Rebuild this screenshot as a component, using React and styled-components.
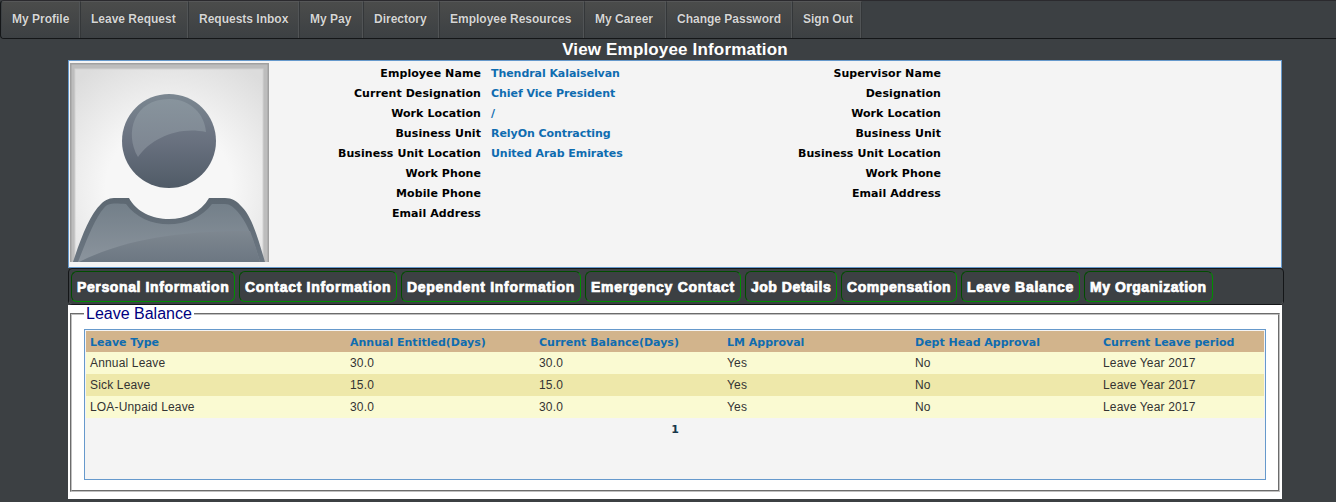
import React from "react";
import styled, { createGlobalStyle } from "styled-components";

const GlobalStyle = createGlobalStyle`
  * { box-sizing: border-box; }
  body {
    margin: 0;
    background: #3c4043;
    font-family: "Liberation Sans", Arial, sans-serif;
    overflow: hidden;
  }
`;

const Page = styled.div`
  height: 502px;
  overflow: hidden;
`;

const NavBar = styled.nav`
  display: flex;
  height: 39px;
  margin-right: -6px;
  padding-left: 1px;
  border: 1px solid #141618;
  border-top-color: #2b2a2e;
  border-radius: 4px;
  overflow: hidden;
`;

const NavItem = styled.a`
  width: ${(p) => p.$width}px;
  flex: none;
  padding-left: 10px;
  border-top: 1px solid #565758;
  border-right: 1px solid #343739;
  box-shadow: inset -1px 0 0 #515456;
  background: linear-gradient(#4b4c4b, #3c4043);
  color: #d5d5d5;
  font-size: 12px;
  font-weight: bold;
  line-height: 35px;
  white-space: nowrap;
  text-shadow: 0 0 1px #222;
`;

const Title = styled.h1`
  margin: 0;
  padding-left: 14px;
  height: 21px;
  color: #fff;
  font-size: 17px;
  letter-spacing: 0.16px;
  line-height: 22px;
  text-align: center;
`;

const Content = styled.main`
  width: 1216px;
  margin-left: 68px;
`;

const Profile = styled.section`
  display: flex;
  width: 1214px;
  height: 208px;
  padding: 2px 1px;
  border: 1px solid #6699cc;
  background: #f4f4f4;
`;

const Avatar = styled.svg`
  display: block;
  flex: none;
  width: 199px;
  height: 199px;
`;

const Details = styled.dl`
  display: grid;
  grid-template-columns: ${(p) => p.$label}px 248px;
  grid-auto-rows: 20px;
  align-content: start;
  column-gap: ${(p) => p.$gap}px;
  margin: 0;
  font: bold 11px/22px "DejaVu Sans", Verdana, sans-serif;
`;

const Label = styled.dt`
  color: #000;
  letter-spacing: 0.08px;
  text-align: right;
  white-space: nowrap;
`;

const Value = styled.dd`
  margin: 0;
  color: #0f6cb0;
  letter-spacing: -0.06px;
  white-space: nowrap;
`;

const TabBar = styled.div`
  display: flex;
  gap: 4px;
  height: 37px;
  padding: 2px;
  border: 1px solid #141618;
  border-radius: 4px;
  background: linear-gradient(#3c4043, #3c4043) padding-box, linear-gradient(#3c4043 50%, #fff 50%);
`;

const Tab = styled.button`
  width: ${(p) => p.$width}px;
  height: 31px;
  flex: none;
  padding: 0 0 0 5px;
  border: 1px solid;
  border-color: #004d00 #008f00 #008f00 #004d00;
  border-radius: 6px;
  background: transparent;
  color: #fff;
  font: bold 14px/31px "Liberation Sans", Arial, sans-serif;
  -webkit-text-stroke: 0.7px #fff;
  letter-spacing: ${(p) => p.$spacing}px;
  text-align: left;
  white-space: nowrap;
`;

const Body = styled.section`
  width: 1214px;
  height: 194px;
  padding: 0 2px 7px;
  background: #fff;
`;

const Group = styled.fieldset`
  height: 187px;
  margin: 0;
  padding: 6px 12px 10px;
  border: 2px groove #c0c0c0;
`;

const Legend = styled.legend`
  padding: 0 2px;
  color: #000080;
  font-size: 16px;
  line-height: 18px;
`;

const Grid = styled.div`
  height: 151px;
  padding: 1px;
  border: 1px solid #6699cc;
  background: #f4f4f4;
`;

const Row = styled.div`
  display: grid;
  grid-template-columns: 260px 189px 188px 188px 188px 1fr;
  height: ${(p) => (p.$head ? 21 : 22)}px;
  background: ${(p) => (p.$head ? "#d2b48c" : p.$alt ? "#eee8aa" : "#fafad2")};
  color: ${(p) => (p.$head ? "#0f6cb0" : "#333")};
  letter-spacing: ${(p) => (p.$head ? 0 : 0.16)}px;
  font: ${(p) =>
    p.$head
      ? 'bold 11px/23px "DejaVu Sans", Verdana, sans-serif'
      : '12px/22px "Liberation Sans", Arial, sans-serif'};
`;

const Cell = styled.div`
  padding-left: 4px;
  white-space: nowrap;
`;

const Pager = styled.div`
  padding-top: 2px;
  color: #17364a;
  font: bold 11px/20px "DejaVu Sans", Verdana, sans-serif;
  text-align: center;
`;

const nav = [
  ["My Profile", 79], ["Leave Request", 108], ["Requests Inbox", 111],
  ["My Pay", 64], ["Directory", 76], ["Employee Resources", 145],
  ["My Career", 82], ["Change Password", 126], ["Sign Out", 69],
];

const employee = [
  ["Employee Name", "Thendral Kalaiselvan"],
  ["Current Designation", "Chief Vice President"],
  ["Work Location", "/"],
  ["Business Unit", "RelyOn Contracting"],
  ["Business Unit Location", "United Arab Emirates"],
  ["Work Phone", ""],
  ["Mobile Phone", ""],
  ["Email Address", ""],
];

const supervisor = [
  "Supervisor Name", "Designation", "Work Location", "Business Unit",
  "Business Unit Location", "Work Phone", "Email Address",
].map((label) => [label, ""]);

const tabs = [
  ["Personal Information", 164, 0.62], ["Contact Information", 158, 0.7],
  ["Dependent Information", 180, 0.7], ["Emergency Contact", 156, 0.73],
  ["Job Details", 92, 0.5], ["Compensation", 116, 0.58],
  ["Leave Balance", 119, 0.75], ["My Organization", 129, 0.52],
];

const columns = [
  "Leave Type", "Annual Entitled(Days)", "Current Balance(Days)",
  "LM Approval", "Dept Head Approval", "Current Leave period",
];

const leaves = [
  ["Annual Leave", "30.0", "30.0", "Yes", "No", "Leave Year 2017"],
  ["Sick Leave", "15.0", "15.0", "Yes", "No", "Leave Year 2017"],
  ["LOA-Unpaid Leave", "30.0", "30.0", "Yes", "No", "Leave Year 2017"],
];

function Fields({ items, label, gap }) {
  return (
    <Details $label={label} $gap={gap}>
      {items.map(([name, value]) => (
        <React.Fragment key={name}>
          <Label>{name}</Label>
          <Value>{value}</Value>
        </React.Fragment>
      ))}
    </Details>
  );
}

function Portrait() {
  return (
    <Avatar viewBox="0 0 199 199" role="img" aria-label="Employee photo">
      <defs>
        <radialGradient id="paper" cx="0.5" cy="0.62" r="0.75">
          <stop offset="0.45" stopColor="#f7f7f7" />
          <stop offset="1" stopColor="#dcdcdc" />
        </radialGradient>
        <linearGradient id="head" x2="0" y2="1">
          <stop stopColor="#7b8791" />
          <stop offset="0.5" stopColor="#69717f" />
          <stop offset="1" stopColor="#505b67" />
        </linearGradient>
        <linearGradient id="headShine" x2="0" y2="1">
          <stop stopColor="#88949d" />
          <stop offset="1" stopColor="#7c8490" />
        </linearGradient>
        <linearGradient id="torso" x2="0" y2="1">
          <stop stopColor="#5d6872" />
          <stop offset="1" stopColor="#6b7681" />
        </linearGradient>
        <linearGradient id="torsoLight" x2="0" y2="1">
          <stop stopColor="#737f89" />
          <stop offset="1" stopColor="#8b949d" />
        </linearGradient>
        <linearGradient id="torsoFold" x2="0" y2="1">
          <stop stopColor="#7e8790" />
          <stop offset="1" stopColor="#6c7782" />
        </linearGradient>
      </defs>
      <path d="M0 0H199V199H0Z" fill="#a0a0a0" />
      <path d="M1.5 1.5H197.5V199H1.5Z" fill="#bdbdbd" />
      <path d="M4.5 5.5H193.5V199H4.5Z" fill="#d2d2d2" />
      <path d="M5.5 6.5H192.5V199H5.5Z" fill="url(#paper)" />
      <circle cx="99" cy="78" r="47" fill="url(#head)" />
      <path d="M68 94C54 70 64 36 99 36C121 36 135 52 136 69C109 63 81 75 68 94Z" fill="url(#headShine)" />
      <path d="M3 199C11 175 20 151 31 141C36 136 40 135 46 135H59C73 162 123 164 139 135H155C162 135 167 138 172 144C182 154 188 175 195 199Z" fill="url(#torso)" />
      <path d="M8 199C17 176 25 155 34 145C38 140 43 140 56 141C75 168 122 168 142 141H155C160 141 163 144 167 148C179 161 184 180 190 199Z" fill="url(#torsoLight)" />
      <path d="M9 199C61 173 121 168 180 168Q185 181 190 199Z" fill="url(#torsoFold)" />
    </Avatar>
  );
}

export default function App() {
  return (
    <Page>
      <GlobalStyle />
      <NavBar>
        {nav.map(([name, width]) => (
          <NavItem key={name} $width={width}>{name}</NavItem>
        ))}
      </NavBar>
      <Title>View Employee Information</Title>
      <Content>
        <Profile>
          <Portrait />
          <Fields items={employee} label={212} gap={10} />
          <Fields items={supervisor} label={202} gap={9} />
        </Profile>
        <TabBar>
          {tabs.map(([name, width, spacing]) => (
            <Tab key={name} $width={width} $spacing={spacing}>{name}</Tab>
          ))}
        </TabBar>
        <Body>
          <Group>
            <Legend>Leave Balance</Legend>
            <Grid>
              <Row $head>
                {columns.map((name) => <Cell key={name}>{name}</Cell>)}
              </Row>
              {leaves.map((leave, i) => (
                <Row key={leave[0]} $alt={i === 1}>
                  {leave.map((text, c) => <Cell key={c}>{text}</Cell>)}
                </Row>
              ))}
              <Pager>1</Pager>
            </Grid>
          </Group>
        </Body>
      </Content>
    </Page>
  );
}
